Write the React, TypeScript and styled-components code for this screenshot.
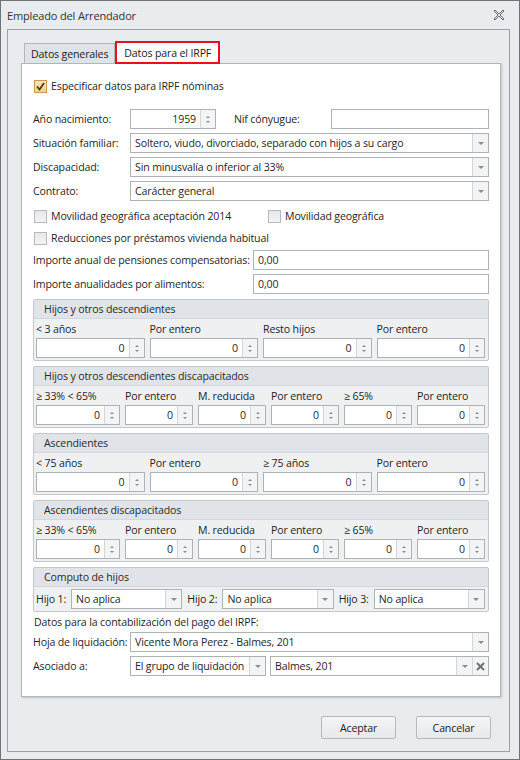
import React from "react";
import styled, { createGlobalStyle } from "styled-components";

const GlobalStyle = createGlobalStyle`
  body {
    margin: 0;
    font-family: "Open Sans", sans-serif;
    font-size: 10.6px;
    letter-spacing: -0.15px;
    color: #1f1f1f;
  }
  * { box-sizing: border-box; }
`;

const Window = styled.div`
  width: 520px;
  height: 760px;
  background: #e9ecef;
  border: 1px solid #6f7378;
  display: flex;
  flex-direction: column;
`;

const TitleBar = styled.div`
  height: 28px;
  display: flex;
  align-items: center;
  justify-content: space-between;
  padding: 0 14px 0 6px;
  font-size: 11px;
  color: #333;
`;

const Frame = styled.div`
  flex: 1;
  margin: 0 9px 7px 6px;
  border: 1px solid #9ea2a7;
  padding: 11px 0 0 13px;
  display: flex;
  flex-direction: column;
`;

const TabStrip = styled.div`
  display: flex;
  align-items: flex-end;
  height: 22px;
  padding-left: 3px;
`;

const Tab = styled.div<{ $active?: boolean }>`
  height: ${(p) => (p.$active ? "23px" : "20px")};
  padding: 0 ${(p) => (p.$active ? "7px" : "6px")};
  display: flex;
  align-items: center;
  background: ${(p) => (p.$active ? "#fff" : "#dfe2e6")};
  border: ${(p) => (p.$active ? "2px solid #e8101a" : "1px solid #b4b8bd")};
  border-bottom: ${(p) => (p.$active ? "2px solid #e8101a" : "none")};
  margin-bottom: ${(p) => (p.$active ? "-1px" : "0")};
  position: relative;
  z-index: ${(p) => (p.$active ? 2 : 1)};
  color: #222;
`;

const Panel = styled.div`
  width: 480px;
  height: 634px;
  background: #fff;
  border: 1px solid #b2b6bb;
  box-shadow: 1px 1px 2px rgba(0, 0, 0, 0.18);
  padding: 15px 11px 0 11px;
  display: flex;
  flex-direction: column;
`;

const CheckRow = styled.div<{ $mt?: number }>`
  display: flex;
  align-items: center;
  height: 14px;
  margin-top: ${(p) => p.$mt ?? 0}px;
  padding-left: 1px;
`;

const CheckItem = styled.label<{ $w?: number }>`
  display: flex;
  align-items: center;
  gap: 4px;
  width: ${(p) => (p.$w ? `${p.$w}px` : "auto")};
`;

const Box = styled.span<{ $checked?: boolean }>`
  width: 13px;
  height: 13px;
  display: inline-flex;
  align-items: center;
  justify-content: center;
  border: 1px solid ${(p) => (p.$checked ? "#c99a55" : "#b7b9bc")};
  background: ${(p) =>
    p.$checked
      ? "linear-gradient(#fbe3b5, #f6d08c)"
      : "linear-gradient(#e6e7e9, #f4f4f5)"};
`;

const FieldRow = styled.div<{ $mt?: number }>`
  display: flex;
  align-items: center;
  height: 20px;
  margin-top: ${(p) => p.$mt ?? 0}px;
`;

const Label = styled.span<{ $w?: number; $pl?: number }>`
  width: ${(p) => (p.$w ? `${p.$w}px` : "auto")};
  padding-left: ${(p) => p.$pl ?? 0}px;
  flex-shrink: 0;
  white-space: nowrap;
`;

const TextBox = styled.div<{ $w?: number; $ml?: number }>`
  height: 20px;
  border: 1px solid #aeb2b7;
  background: #fff;
  padding: 0 4px;
  display: flex;
  align-items: center;
  width: ${(p) => (p.$w ? `${p.$w}px` : "auto")};
  flex: ${(p) => (p.$w ? "none" : "1")};
  margin-left: ${(p) => p.$ml ?? 0}px;
  white-space: nowrap;
  overflow: hidden;
`;

const SpinWrap = styled.div<{ $w?: number }>`
  height: 20px;
  border: 1px solid #aeb2b7;
  background: #fff;
  display: flex;
  width: ${(p) => (p.$w ? `${p.$w}px` : "100%")};
`;

const SpinValue = styled.div`
  flex: 1;
  display: flex;
  align-items: center;
  justify-content: flex-end;
  padding-right: 4px;
`;

const SpinBtns = styled.div`
  width: 15px;
  border-left: 1px solid #d3d5d8;
  background: #f3f4f5;
  display: flex;
  flex-direction: column;
  align-items: center;
  justify-content: center;
  gap: 3px;
`;

const Tri = styled.span<{ $up?: boolean; $size?: number }>`
  width: 0;
  height: 0;
  border-left: ${(p) => p.$size ?? 2}px solid transparent;
  border-right: ${(p) => p.$size ?? 2}px solid transparent;
  ${(p) =>
    p.$up
      ? `border-bottom: ${p.$size ?? 2}px solid #8a8d91;`
      : `border-top: ${p.$size ?? 2}px solid #8a8d91;`}
`;

const ComboWrap = styled.div<{ $w?: number; $ml?: number }>`
  height: 20px;
  border: 1px solid #aeb2b7;
  background: #fff;
  display: flex;
  width: ${(p) => (p.$w ? `${p.$w}px` : "auto")};
  flex: ${(p) => (p.$w ? "none" : "1")};
  margin-left: ${(p) => p.$ml ?? 0}px;
`;

const ComboText = styled.div`
  flex: 1;
  display: flex;
  align-items: center;
  padding-left: 4px;
  white-space: nowrap;
  overflow: hidden;
`;

const ComboBtn = styled.div`
  width: 16px;
  border-left: 1px solid #d3d5d8;
  background: #f3f4f5;
  display: flex;
  align-items: center;
  justify-content: center;
`;

const Group = styled.div<{ $mt?: number }>`
  margin-top: ${(p) => p.$mt ?? 5}px;
  width: 456px;
  border: 1px solid #c4c7cb;
  border-radius: 2px;
  background: #eef0f2;
  padding-bottom: 2px;
`;

const GroupHeader = styled.div`
  height: 19px;
  background: #e0e3e7;
  border-bottom: 1px solid #d3d6da;
  padding-left: 10px;
  display: flex;
  align-items: center;
  color: #2b2b2b;
`;

const Grid = styled.div<{ $cols: string }>`
  display: grid;
  grid-template-columns: ${(p) => p.$cols};
  column-gap: 5px;
  padding: 0 3px 0 2px;
`;

const ColLabel = styled.div`
  height: 19px;
  display: flex;
  align-items: center;
  white-space: nowrap;
`;

const ComputoRow = styled.div`
  display: flex;
  align-items: center;
  padding: 2px 3px 0 2px;
  gap: 5px;
`;

const ClearBtn = styled.div`
  width: 16px;
  border-left: 1px solid #d3d5d8;
  background: #f3f4f5;
  display: flex;
  align-items: center;
  justify-content: center;
`;

const Footer = styled.div`
  display: flex;
  justify-content: flex-end;
  gap: 20px;
  padding: 19px 18px 0 0;
`;

const Button = styled.div`
  width: 75px;
  height: 23px;
  border: 1px solid #b6b9bd;
  border-radius: 2px;
  background: linear-gradient(#f4f5f6, #e6e8ea);
  display: flex;
  align-items: center;
  justify-content: center;
  color: #222;
`;

const Spin = ({ value, w }: { value: string; w?: number }) => (
  <SpinWrap $w={w}>
    <SpinValue>{value}</SpinValue>
    <SpinBtns>
      <Tri $up />
      <Tri />
    </SpinBtns>
  </SpinWrap>
);

const Combo = ({ text, w, ml, clear }: { text: string; w?: number; ml?: number; clear?: boolean }) => (
  <ComboWrap $w={w} $ml={ml}>
    <ComboText>{text}</ComboText>
    <ComboBtn>
      <Tri $size={3} />
    </ComboBtn>
    {clear && (
      <ClearBtn>
        <svg width="9" height="9" viewBox="0 0 9 9">
          <path d="M1 1 L8 8 M8 1 L1 8" stroke="#6c6f73" strokeWidth="2" />
        </svg>
      </ClearBtn>
    )}
  </ComboWrap>
);

const Check = ({ checked, label, w }: { checked?: boolean; label: string; w?: number }) => (
  <CheckItem $w={w}>
    <Box $checked={checked}>
      {checked && (
        <svg width="9" height="9" viewBox="0 0 9 9">
          <path d="M1 4.5 L3.5 7.5 L8 1" stroke="#4a3a20" strokeWidth="1.8" fill="none" />
        </svg>
      )}
    </Box>
    {label}
  </CheckItem>
);

const SpinGroup = ({ title, cols, labels }: { title: string; cols: string; labels: string[] }) => (
  <Group>
    <GroupHeader>{title}</GroupHeader>
    <Grid $cols={cols}>
      {labels.map((l, i) => (
        <ColLabel key={"l" + i}>{l}</ColLabel>
      ))}
      {labels.map((_, i) => (
        <Spin key={"s" + i} value="0" />
      ))}
    </Grid>
  </Group>
);

const CloseIcon = () => (
  <svg width="12" height="12" viewBox="0 0 12 12">
    <path
      d="M1 2 L2 1 L6 5 L10 1 L11 2 L7 6 L11 10 L10 11 L6 7 L2 11 L1 10 L5 6 Z"
      fill="none"
      stroke="#5a5d61"
      strokeWidth="0.9"
    />
  </svg>
);

const App = () => {
  return (
    <>
      <GlobalStyle />
      <Window>
        <TitleBar>
          <span>Empleado del Arrendador</span>
          <CloseIcon />
        </TitleBar>
        <Frame>
          <TabStrip>
            <Tab>Datos generales</Tab>
            <Tab $active>Datos para el IRPF</Tab>
          </TabStrip>
          <Panel>
            <CheckRow>
              <Check checked label="Especificar datos para IRPF nóminas" />
            </CheckRow>

            <FieldRow $mt={16}>
              <Label $w={97}>Año nacimiento:</Label>
              <Spin value="1959" w={86} />
              <Label $w={115} $pl={18}>Nif cónyugue:</Label>
              <TextBox />
            </FieldRow>
            <FieldRow $mt={4}>
              <Label $w={97}>Situación familiar:</Label>
              <Combo text="Soltero, viudo, divorciado, separado con hijos a su cargo" />
            </FieldRow>
            <FieldRow $mt={4}>
              <Label $w={97}>Discapacidad:</Label>
              <Combo text="Sin minusvalía o inferior al 33%" />
            </FieldRow>
            <FieldRow $mt={4}>
              <Label $w={97}>Contrato:</Label>
              <Combo text="Carácter general" />
            </FieldRow>

            <CheckRow $mt={8}>
              <Check label="Movilidad geográfica aceptación 2014" w={234} />
              <Check label="Movilidad geográfica" />
            </CheckRow>
            <CheckRow $mt={8}>
              <Check label="Reducciones por préstamos vivienda habitual" />
            </CheckRow>

            <FieldRow $mt={5}>
              <Label $w={220}>Importe anual de pensiones compensatorias:</Label>
              <TextBox>0,00</TextBox>
            </FieldRow>
            <FieldRow $mt={4}>
              <Label $w={220}>Importe anualidades por alimentos:</Label>
              <TextBox>0,00</TextBox>
            </FieldRow>

            <SpinGroup
              title="Hijos y otros descendientes"
              cols="repeat(4, 1fr)"
              labels={["< 3 años", "Por entero", "Resto hijos", "Por entero"]}
            />
            <SpinGroup
              title="Hijos y otros descendientes discapacitados"
              cols="84px repeat(5, 1fr)"
              labels={["≥ 33% < 65%", "Por entero", "M. reducida", "Por entero", "≥ 65%", "Por entero"]}
            />
            <SpinGroup
              title="Ascendientes"
              cols="repeat(4, 1fr)"
              labels={["< 75 años", "Por entero", "≥ 75 años", "Por entero"]}
            />
            <SpinGroup
              title="Ascendientes discapacitados"
              cols="84px repeat(5, 1fr)"
              labels={["≥ 33% < 65%", "Por entero", "M. reducida", "Por entero", "≥ 65%", "Por entero"]}
            />
            <Group>
              <GroupHeader>Computo de hijos</GroupHeader>
              <ComputoRow>
                <Label>Hijo 1:</Label>
                <Combo text="No aplica" />
                <Label>Hijo 2:</Label>
                <Combo text="No aplica" />
                <Label>Hijo 3:</Label>
                <Combo text="No aplica" />
              </ComputoRow>
            </Group>

            <CheckRow $mt={3}>Datos para la contabilización del pago del IRPF:</CheckRow>
            <FieldRow $mt={3}>
              <Label $w={97}>Hoja de liquidación:</Label>
              <Combo text="Vicente Mora Perez - Balmes, 201" />
            </FieldRow>
            <FieldRow $mt={4}>
              <Label $w={97}>Asociado a:</Label>
              <Combo text="El grupo de liquidación" w={136} />
              <Combo text="Balmes, 201" ml={4} clear />
            </FieldRow>
          </Panel>
          <Footer>
            <Button>Aceptar</Button>
            <Button>Cancelar</Button>
          </Footer>
        </Frame>
      </Window>
    </>
  );
};

export default App;
